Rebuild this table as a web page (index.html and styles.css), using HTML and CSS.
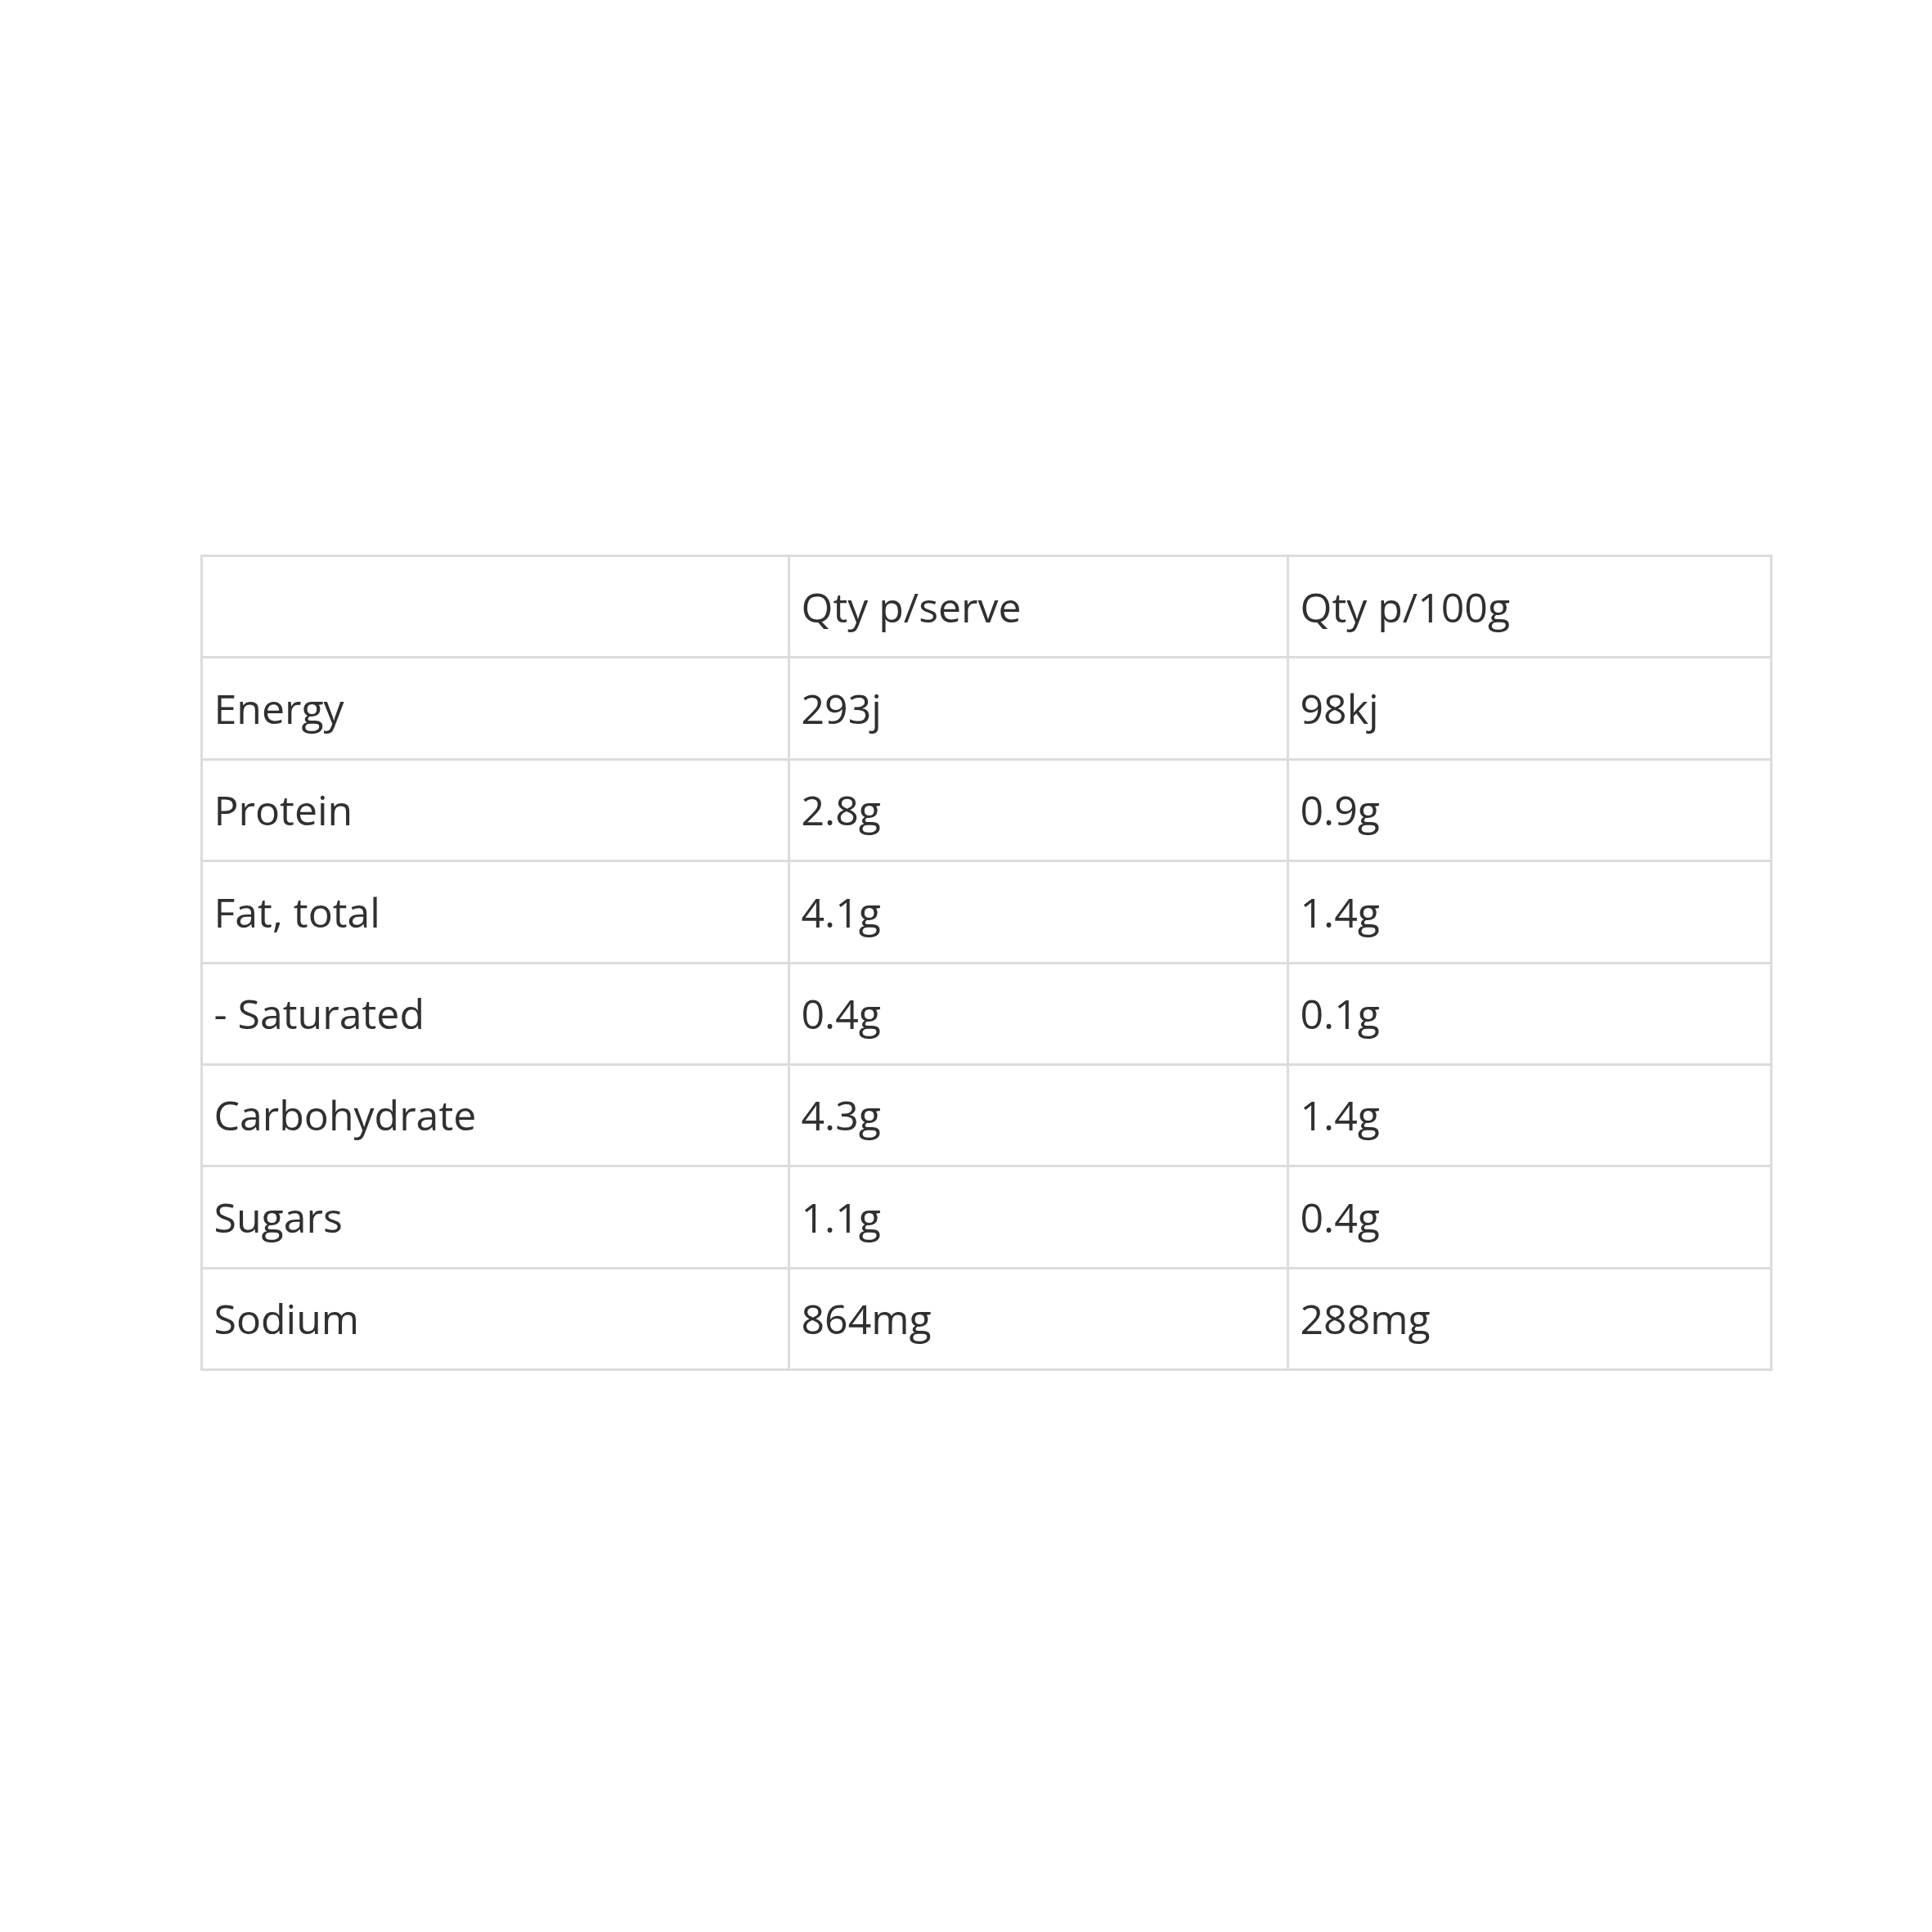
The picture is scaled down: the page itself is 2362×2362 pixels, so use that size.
FILE: index.html
```html
<!DOCTYPE html>
<html lang="en">
<head>
<meta charset="utf-8">
<title>Nutrition information</title>
<link rel="stylesheet" href="styles.css">
</head>
<body>
<main class="page">
  <table class="nutrition">
    <colgroup>
      <col class="col-name">
      <col class="col-serve">
      <col class="col-100g">
    </colgroup>
    <tr><td></td><td>Qty p/serve</td><td>Qty p/100g</td></tr>
    <tr><td>Energy</td><td>293j</td><td>98kj</td></tr>
    <tr><td>Protein</td><td>2.8g</td><td>0.9g</td></tr>
    <tr><td>Fat, total</td><td>4.1g</td><td>1.4g</td></tr>
    <tr><td>- Saturated</td><td>0.4g</td><td>0.1g</td></tr>
    <tr><td>Carbohydrate</td><td>4.3g</td><td>1.4g</td></tr>
    <tr><td>Sugars</td><td>1.1g</td><td>0.4g</td></tr>
    <tr><td>Sodium</td><td>864mg</td><td>288mg</td></tr>
  </table>
</main>
</body>
</html>
```

FILE: styles.css
```css
html, body {
  margin: 0;
  padding: 0;
  background: #ffffff;
}

.page {
  padding: 678px 0 0 245px;
}

.nutrition {
  border-collapse: collapse;
  table-layout: fixed;
  width: 1919px;
  font-family: "Open Sans", "Liberation Sans", sans-serif;
  font-size: 50px;
  line-height: 71px;
  color: #303030;
}

.col-name { width: 718px; }
.col-serve { width: 610px; }
.col-100g { width: 591px; }

.nutrition td {
  border: 3px solid #dcdcdc;
  padding: 25.5px 12px 24.9px 13.5px;
  text-align: left;
  vertical-align: top;
  white-space: nowrap;
}
```
